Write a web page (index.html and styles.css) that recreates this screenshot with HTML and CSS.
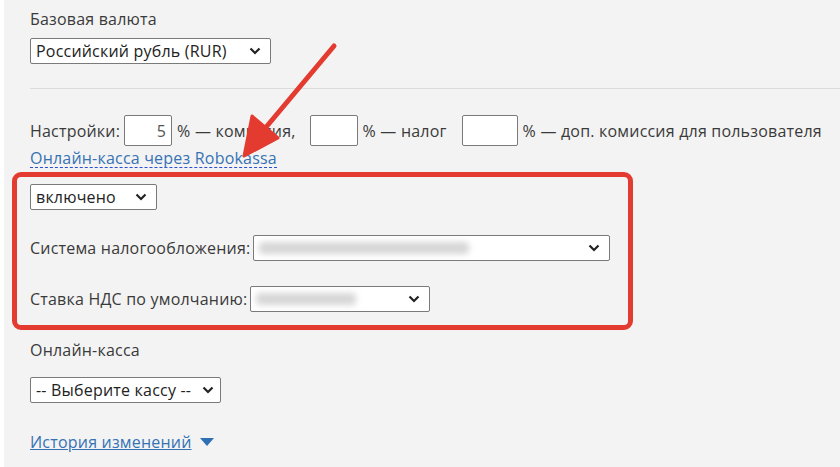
FILE: index.html
```html
<!DOCTYPE html>
<html lang="ru">
<head>
    <meta charset="UTF-8">
    <title>Настройки оплаты</title>
    <link rel="stylesheet" href="styles.css">
</head>
<body>
    <div class="page">
        <div class="label">Базовая валюта</div>
        <div class="select sel-currency">
            <span>Российский рубль (RUR)</span>
            <svg class="chev" width="12" height="8" viewBox="0 0 12 8"><path d="M1.5 1.5 L6 6 L10.5 1.5" fill="none" stroke="#222" stroke-width="2.2"/></svg>
        </div>

        <hr class="sep">

        <div class="settings">
            <span>Настройки:</span>
            <span class="num n1">5</span>
            <span class="after">% — комиссия,</span>
            <span class="num n2"></span>
            <span class="after">% — налог</span>
            <span class="num n3"></span>
            <span>% — доп. комиссия для пользователя</span>
        </div>
        <a class="dash-link" href="#">Онлайн-касса через Robokassa</a>

        <div class="highlight">
            <div class="select sel-on">
                <span>включено</span>
                <svg class="chev" width="12" height="8" viewBox="0 0 12 8"><path d="M1.5 1.5 L6 6 L10.5 1.5" fill="none" stroke="#222" stroke-width="2.2"/></svg>
            </div>
            <div class="field">
                <span>Система налогообложения:</span>
                <div class="select sel-tax">
                    <span class="blur w1"></span>
                    <svg class="chev" width="12" height="8" viewBox="0 0 12 8"><path d="M1.5 1.5 L6 6 L10.5 1.5" fill="none" stroke="#222" stroke-width="2.2"/></svg>
                </div>
            </div>
            <div class="field">
                <span>Ставка НДС по умолчанию:</span>
                <div class="select sel-vat">
                    <span class="blur w2"></span>
                    <svg class="chev" width="12" height="8" viewBox="0 0 12 8"><path d="M1.5 1.5 L6 6 L10.5 1.5" fill="none" stroke="#222" stroke-width="2.2"/></svg>
                </div>
            </div>
        </div>

        <div class="label label-kassa">Онлайн-касса</div>
        <div class="select sel-kassa">
            <span>-- Выберите кассу --</span>
            <svg class="chev" width="12" height="8" viewBox="0 0 12 8"><path d="M1.5 1.5 L6 6 L10.5 1.5" fill="none" stroke="#222" stroke-width="2.2"/></svg>
        </div>

        <div class="history">
            <a href="#">История изменений</a>
            <svg width="14" height="8" viewBox="0 0 14 8"><path d="M0 0 H14 L7 8 Z" fill="#2f6fb3"/></svg>
        </div>
    </div>

    <svg class="arrow" width="120" height="130" viewBox="0 0 120 130">
        <line x1="112" y1="14" x2="40" y2="100" stroke="#e43b30" stroke-width="5" stroke-linecap="round"/>
        <path d="M22 124 L30 84 L56 106 Z" fill="#e43b30" stroke="#e43b30" stroke-width="3" stroke-linejoin="round"/>
    </svg>
</body>
</html>
```

FILE: styles.css
```css
body {
    margin: 0;
    background: #fff;
    font-family: "Open Sans", sans-serif;
    font-size: 16px;
    letter-spacing: 0.2px;
    color: #3a3a3a;
}
.page {
    position: relative;
    margin-left: 4px;
    background: #f3f3f3;
    min-height: 467px;
    padding: 10px 0 0 26px;
    box-sizing: border-box;
}
.label { line-height: 18px; }
.select {
    display: flex;
    align-items: center;
    justify-content: space-between;
    box-sizing: border-box;
    height: 26px;
    padding: 0 9px 0 5px;
    background: #fff;
    border: 1px solid #7a7a7a;
    border-radius: 2px;
    color: #222;
}
.chev { flex: none; }
.sel-currency { width: 241px; margin-top: 10px; }
.sep {
    border: 0;
    border-top: 1px solid #dcdcdc;
    margin: 24px 0 0 0;
}
.settings {
    display: flex;
    align-items: center;
    margin-top: 26px;
    line-height: 18px;
}
.num {
    box-sizing: border-box;
    height: 31px;
    width: 48px;
    background: #fff;
    border: 1px solid #7a7a7a;
    border-radius: 2px;
    margin: 0 5px 0 4px;
    text-align: right;
    padding: 6px 5px 0 0;
    color: #555;
}
.n2 { margin-left: 14px; width: 48px; }
.n3 { margin-left: 15px; width: 56px; }
.dash-link {
    display: inline-block;
    margin-top: 3px;
    color: #3672b4;
    text-decoration: none;
    border-bottom: 1px dashed #2a4fd0;
    line-height: 18px;
}
.highlight {
    margin: 3px 0 0 -18px;
    width: 621px;
    box-sizing: border-box;
    border: 5px solid #e43b30;
    border-radius: 9px;
    padding: 7px 0 13px 13px;
}
.sel-on { width: 127px; }
.field {
    display: flex;
    align-items: center;
    gap: 3px;
    margin-top: 25px;
    line-height: 18px;
}
.sel-tax { width: 357px; }
.sel-vat { width: 180px; }
.blur {
    display: block;
    height: 12px;
    background: #d6d6d6;
    filter: blur(3px);
    border-radius: 4px;
}
.w1 { width: 210px; }
.w2 { width: 100px; }
.label-kassa { margin-top: 11px; }
.sel-kassa { width: 191px; margin-top: 18px; padding-right: 6px; }
.history {
    display: flex;
    align-items: center;
    gap: 8px;
    margin-top: 30px;
    line-height: 18px;
}
.history a { color: #3672b4; }
.arrow {
    position: absolute;
    left: 222px;
    top: 32px;
}
```
